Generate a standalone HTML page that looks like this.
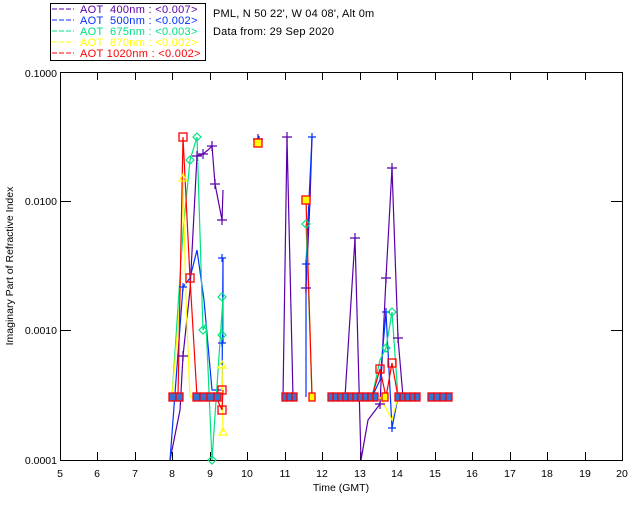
<!DOCTYPE html>
<html><head><meta charset="utf-8"><style>
html,body{margin:0;padding:0;background:#fff;width:640px;height:512px;overflow:hidden}
svg{display:block;font-family:"Liberation Sans",sans-serif}
</style></head><body>
<svg width="640" height="512" viewBox="0 0 640 512" xmlns="http://www.w3.org/2000/svg">
<rect width="640" height="512" fill="#fff"/>
<rect x="50.5" y="3.5" width="155" height="57" fill="none" stroke="#000" stroke-width="1"/>
<g font-size="11" letter-spacing="0.3">
<line x1="52" y1="9" x2="74" y2="9" stroke="#5a00a8" stroke-dasharray="5,2"/>
<text x="80" y="13" fill="#5a00a8" xml:space="preserve">AOT  400nm : &lt;0.007&gt;</text>
<line x1="52" y1="20" x2="74" y2="20" stroke="#0030ff" stroke-dasharray="5,2"/>
<text x="80" y="24" fill="#0030ff" xml:space="preserve">AOT  500nm : &lt;0.002&gt;</text>
<line x1="52" y1="31" x2="74" y2="31" stroke="#00e080" stroke-dasharray="5,2"/>
<text x="80" y="35" fill="#00e080" xml:space="preserve">AOT  675nm : &lt;0.003&gt;</text>
<line x1="52" y1="42" x2="74" y2="42" stroke="#ffff00" stroke-dasharray="5,2"/>
<text x="80" y="46" fill="#ffff00" xml:space="preserve">AOT  870nm : &lt;0.002&gt;</text>
<line x1="52" y1="53" x2="74" y2="53" stroke="#ff0000" stroke-dasharray="5,2"/>
<text x="80" y="57" fill="#ff0000" xml:space="preserve">AOT 1020nm : &lt;0.002&gt;</text>
</g>
<text x="213" y="17" font-size="11" letter-spacing="0.2">PML, N 50 22', W 04 08', Alt 0m</text>
<text x="213" y="35" font-size="11" letter-spacing="0.2">Data from: 29 Sep 2020</text>
<rect x="60.5" y="72.5" width="562" height="388" fill="none" stroke="#000"/>
<g stroke="#000">
<path d="M97.5 72v8M135.5 72v8M172.5 72v8M210.5 72v8M247.5 72v8M285.5 72v8M322.5 72v8M360.5 72v8M397.5 72v8M435.5 72v8M472.5 72v8M510.5 72v8M547.5 72v8M585.5 72v8"/>
<path d="M97.5 460v-8M135.5 460v-8M172.5 460v-8M210.5 460v-8M247.5 460v-8M285.5 460v-8M322.5 460v-8M360.5 460v-8M397.5 460v-8M435.5 460v-8M472.5 460v-8M510.5 460v-8M547.5 460v-8M585.5 460v-8"/>
<path d="M60 201.5h11M60 330.5h11M622 201.5h-11M622 330.5h-11"/>
</g>
<g font-size="10.5" text-anchor="end">
<text x="57" y="77">0.1000</text><text x="57" y="205">0.0100</text><text x="57" y="334">0.0010</text><text x="57" y="464">0.0001</text>
</g>
<g font-size="10.5" text-anchor="middle">
<text x="60" y="477">5</text><text x="97" y="477">6</text><text x="135" y="477">7</text><text x="172" y="477">8</text><text x="210" y="477">9</text><text x="247" y="477">10</text><text x="285" y="477">11</text><text x="322" y="477">12</text><text x="360" y="477">13</text><text x="397" y="477">14</text><text x="435" y="477">15</text><text x="472" y="477">16</text><text x="510" y="477">17</text><text x="547" y="477">18</text><text x="585" y="477">19</text><text x="622" y="477">20</text>
<text x="341" y="491">Time (GMT)</text>
<text transform="translate(13,266) rotate(-90)">Imaginary Part of Refractive Index</text>
</g>
<g fill="none" stroke-width="1.2">
<polyline stroke="#5a00a8" points="170,460 180,410 183,356 190,290 197,156 203,154 208,150 212,146 215,184 222,220 223,190"/>
<polyline stroke="#5a00a8" points="283,397 287,137 293,397"/>
<polyline stroke="#5a00a8" points="306,288 310,200 312,137"/>
<polyline stroke="#5a00a8" points="345,397 355,238 361,460 368,420 380,404 386,278 392,168 398,338 403,397"/>
<polyline stroke="#0030ff" points="170,460 183,287 190,278 197,250 204,300 212,390 222,390 223,258 223,343"/>
<polyline stroke="#0030ff" points="306,397 306,264 312,137"/>
<polyline stroke="#0030ff" points="372,397 380,380 386,312 392,428 398,397"/>
<polyline stroke="#00e080" points="172,397 183,232 190,160 197,137 203,330 206,323 212,460 223,297 223,335"/>
<polyline stroke="#00e080" points="306,224 312,392"/>
<polyline stroke="#00e080" points="372,397 380,360 386,348 392,312 398,397"/>
<polyline stroke="#ffff00" points="172,397 180,300 183,178 186,300 190,397 222,397 222,365 223,432"/>
<polyline stroke="#ffff00" points="306,200 312,397"/>
<polyline stroke="#ffff00" points="380,397 392,420 398,397"/>
<polyline stroke="#ff0000" points="172,397 178,397 183,137 190,278 197,397 216,397 222,410 223,390"/>
<polyline stroke="#ff0000" points="306,200 312,397"/>
<polyline stroke="#ff0000" points="372,397 380,369 386,397 392,363 398,397"/>
<line stroke="#ff0000" x1="283" y1="397" x2="293" y2="397"/>
</g>
<g stroke="#5a00a8" stroke-width="1.2">
<path d="M178 356h10M183 351v10M192 156h10M197 151v10M203 149v10M198 154h10M207 146h10M212 141v10M210 184h10M215 179v10M217 220h10M222 215v10M253 139h10M258 134v10M282 137h10M287 132v10M301 288h10M306 283v10M350 238h10M355 233v10M375 404h10M380 399v10M381 278h10M386 273v10M387 168h10M392 163v10M393 338h10M398 333v10"/>
</g>
<g stroke="#0030ff" stroke-width="1.2">
<path d="M179 287h8M183 283v8M218 258h8M222 254v8M218 343h8M222 339v8M308 137h8M312 133v8M302 264h8M306 260v8M382 312h8M386 308v8M388 428h8M392 424v8M256 139h6M259 136v6"/>
</g>
<g fill="none" stroke="#00e080" stroke-width="1.2">
<path d="M190 156l4 4-4 4-4-4zM197 133l4 4-4 4-4-4zM203 326l4 4-4 4-4-4zM222 293l4 4-4 4-4-4zM222 331l4 4-4 4-4-4zM306 220l4 4-4 4-4-4zM392 308l4 4-4 4-4-4zM386 344l4 4-4 4-4-4zM212 456l4 4-4 4-4-4z"/>
</g>
<g fill="none" stroke="#ffff00" stroke-width="1.2">
<path d="M183 174l4 7h-8zM222 361l4 7h-8zM223 428l4 7h-8z"/>
</g>
<g fill="none" stroke="#ff0000" stroke-width="1.3">
<rect x="179" y="133" width="8" height="8"/><rect x="186" y="274" width="8" height="8"/><rect x="218" y="386" width="8" height="8"/><rect x="218" y="406" width="8" height="8"/><rect x="254" y="139" width="8" height="8" fill="#ff0"/><rect x="302" y="196" width="8" height="8" fill="#ff0"/><rect x="376" y="365" width="8" height="8"/><rect x="388" y="359" width="8" height="8"/>
</g>
<g stroke="#ff0000" stroke-width="1.3" fill="#3a70d0">
<rect x="169" y="393" width="7" height="8"/><rect x="176" y="393" width="7" height="8"/>
<rect x="193" y="393" width="7" height="8"/><rect x="200" y="393" width="7" height="8"/><rect x="207" y="393" width="7" height="8"/><rect x="214" y="393" width="7" height="8"/>
<rect x="282" y="393" width="5" height="8"/><rect x="287" y="393" width="5" height="8"/><rect x="292" y="393" width="5" height="8"/>
<rect x="309" y="393" width="6" height="8" fill="#ff0"/>
<rect x="328" y="393" width="5" height="8"/><rect x="333" y="393" width="5" height="8"/><rect x="338" y="393" width="5" height="8"/><rect x="343" y="393" width="5" height="8"/><rect x="348" y="393" width="5" height="8"/><rect x="353" y="393" width="5" height="8"/><rect x="358" y="393" width="5" height="8"/><rect x="363" y="393" width="5" height="8"/><rect x="368" y="393" width="5" height="8"/><rect x="373" y="393" width="5" height="8"/>
<rect x="382" y="393" width="6" height="8" fill="#ff0"/>
<rect x="395" y="393" width="5" height="8"/><rect x="400" y="393" width="5" height="8"/><rect x="405" y="393" width="5" height="8"/><rect x="410" y="393" width="5" height="8"/><rect x="415" y="393" width="5" height="8"/>
<rect x="428" y="393" width="6" height="8"/><rect x="434" y="393" width="6" height="8"/><rect x="440" y="393" width="6" height="8"/><rect x="446" y="393" width="6" height="8"/>
</g>
</svg>
</body></html>
